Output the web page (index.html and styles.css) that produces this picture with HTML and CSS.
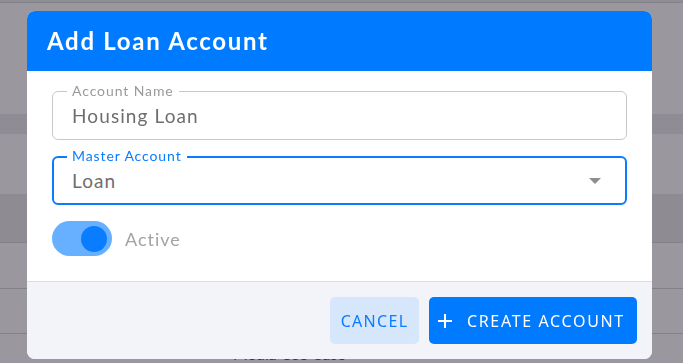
FILE: index.html
```html
<!DOCTYPE html>
<html>
<head>
  <title>Add Loan Account</title>
  <link rel="stylesheet" href="styles.css">
</head>
<body>
  <div class="page">
    <div class="row row-top"></div>
    <div class="row row-gap1"></div>
    <div class="row row-head"></div>
    <div class="row row-gap2"></div>
    <div class="row row-band"></div>
    <div class="row row-line"></div>
    <div class="row row-line"></div>
    <div class="row row-last"><span class="row-text">Media Use Case</span></div>
  </div>

  <div class="overlay">
    <div class="modal">
      <div class="modal-header">
        <h2 class="modal-title">Add Loan Account</h2>
      </div>

      <div class="modal-body">
        <div class="field">
          <span class="field-label">Account Name</span>
          <input type="text" class="field-input" value="Housing Loan">
        </div>

        <div class="field field-focus">
          <span class="field-label">Master Account</span>
          <div class="field-input field-select">
            <span>Loan</span>
            <span class="caret"></span>
          </div>
        </div>

        <div class="switch-row">
          <span class="switch"><span class="switch-thumb"></span></span>
          <span class="switch-label">Active</span>
        </div>
      </div>

      <div class="modal-footer">
        <button class="btn btn-cancel">CANCEL</button>
        <button class="btn btn-create">
          <svg class="plus" width="14" height="14" viewBox="0 0 14 14">
            <path d="M7 0v14M0 7h14" stroke="#fff" stroke-width="2"/>
          </svg>
          CREATE ACCOUNT
        </button>
      </div>
    </div>
  </div>
</body>
</html>
```

FILE: styles.css
```css
* {
  box-sizing: border-box;
}

body {
  margin: 0;
  background-color: #9a989e;
  font-family: Lato, "Open Sans", sans-serif;
  overflow: hidden;
}

.page {
  display: flex;
  flex-direction: column;
  height: 363px;
}

.row {
  border-bottom: 1px solid #838188;
}

.row-top {
  height: 3px;
  background-color: #8f8d94;
}

.row-gap1 {
  height: 115px;
  border-bottom: none;
}

.row-head {
  height: 20px;
  background-color: #8f8c95;
  border-bottom: none;
}

.row-gap2 {
  height: 62px;
  border-bottom: none;
}

.row-band {
  height: 51px;
  background-color: #8e8b92;
}

.row-line {
  height: 47px;
}

.row-last {
  flex: 1;
  border-bottom: none;
  padding-left: 233px;
  padding-top: 10px;
}

.row-text {
  font-size: 16px;
  color: #3a3a3e;
}

.overlay {
  position: fixed;
  top: 0;
  left: 0;
  right: 0;
  bottom: 0;
  padding: 11px 31px 0 27px;
}

.modal {
  width: 625px;
  background-color: #ffffff;
  border-radius: 8px;
  overflow: hidden;
}

.modal-header {
  background-color: #007bff;
  height: 60px;
  padding: 0 20px 2px 20px;
  display: flex;
  align-items: center;
}

.modal-title {
  margin: 0;
  color: #ffffff;
  font-size: 24px;
  font-weight: 700;
  letter-spacing: 1.7px;
}

.modal-body {
  padding: 20px 25px 25px 25px;
  display: flex;
  flex-direction: column;
}

.field {
  position: relative;
  margin-bottom: 16px;
}

.field-label {
  position: absolute;
  top: -8px;
  left: 15px;
  padding: 0 5px;
  background-color: #ffffff;
  font-size: 14px;
  line-height: 15px;
  letter-spacing: 0.9px;
  color: #9a9a9a;
}

.field-input {
  width: 100%;
  height: 49px;
  border: 1px solid #c8c8c8;
  border-radius: 6px;
  padding: 0 19px;
  font-family: Lato, "Open Sans", sans-serif;
  font-size: 19px;
  letter-spacing: 1.1px;
  color: #6e6e6e;
  background-color: #ffffff;
  outline: none;
}

.field-focus .field-label {
  color: #0a7cff;
}

.field-select {
  display: flex;
  align-items: center;
  justify-content: space-between;
  border: 2px solid #0a7cff;
  padding: 0 24px 0 18px;
}

.caret {
  width: 0;
  height: 0;
  border-left: 6px solid transparent;
  border-right: 6px solid transparent;
  border-top: 6px solid #8e8e8e;
}

.switch-row {
  display: flex;
  align-items: center;
  gap: 13px;
}

.switch {
  width: 60px;
  height: 35px;
  border-radius: 18px;
  background-color: #66b0ff;
  display: flex;
  align-items: center;
  justify-content: flex-end;
  padding-right: 5px;
}

.switch-thumb {
  width: 26px;
  height: 26px;
  border-radius: 50%;
  background-color: #0a7cff;
}

.switch-label {
  font-size: 18px;
  letter-spacing: 1px;
  color: #a3a3a3;
}

.modal-footer {
  background-color: #f3f4f9;
  border-top: 1px solid #dcdde2;
  height: 78px;
  padding: 15px 15px 0 0;
  display: flex;
  justify-content: flex-end;
  align-items: flex-start;
  gap: 10px;
}

.btn {
  height: 47px;
  border: none;
  border-radius: 5px;
  font-family: "Noto Sans", sans-serif;
  font-size: 16px;
  letter-spacing: 1.3px;
  cursor: pointer;
  display: flex;
  align-items: center;
}

.btn-cancel {
  width: 89px;
  justify-content: center;
  background-color: #d6e6fb;
  color: #0a7cff;
}

.btn-create {
  width: 208px;
  padding-left: 9px;
  gap: 15px;
  letter-spacing: 1.65px;
  background-color: #007bff;
  color: #ffffff;
}
```
